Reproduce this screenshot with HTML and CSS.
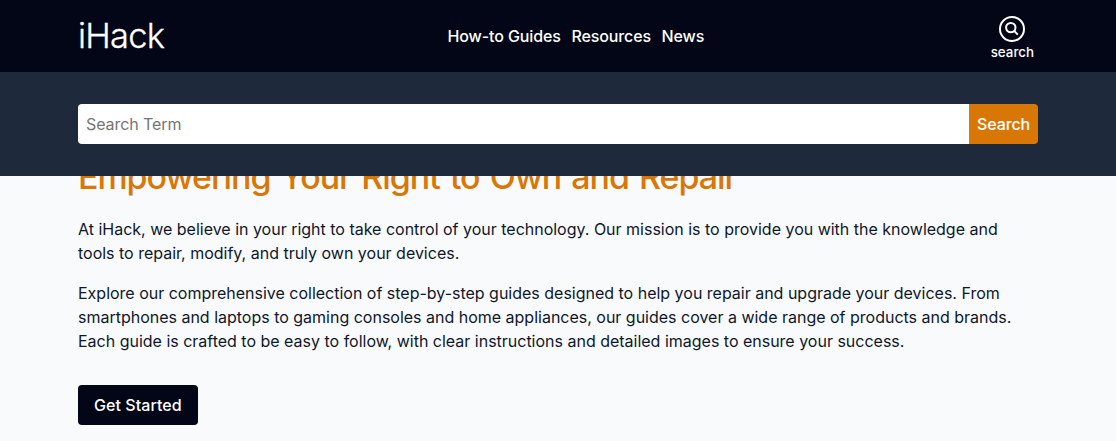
FILE: index.html
```html
<!DOCTYPE html>
<html lang="en">
<head>
<meta charset="utf-8">
<title>iHack</title>
<link rel="stylesheet" href="styles.css">
</head>
<body>
<header class="header">
  <div class="bar">
    <div class="container bar-inner">
      <a class="logo">iHack</a>
      <nav class="nav"><a>How-to Guides</a><a>Resources</a><a>News</a></nav>
      <button class="toggle">
        <svg width="28" height="28" viewBox="0 0 28 28" fill="none" stroke="currentColor" stroke-width="2"><circle cx="14" cy="14" r="12"/><circle cx="12.8" cy="12.6" r="4.7"/><path d="M16.1 15.9L19.8 19.6"/></svg>
        <span>search</span>
      </button>
    </div>
  </div>
  <div class="search-panel">
    <form class="container search-form">
      <input class="field" type="text" placeholder="Search Term">
      <button class="submit" type="button">Search</button>
    </form>
  </div>
</header>
<main class="container hero">
  <h1 class="title">Empowering Your Right to Own and Repair</h1>
  <p class="text">At iHack, we believe in your right to take control of your technology. Our mission is to provide you with the knowledge and tools to repair, modify, and truly own your devices.</p>
  <p class="text">Explore our comprehensive collection of step-by-step guides designed to help you repair and upgrade your devices. From smartphones and laptops to gaming consoles and home appliances, our guides cover a wide range of products and brands. Each guide is crafted to be easy to follow, with clear instructions and detailed images to ensure your success.</p>
  <a class="cta">Get Started</a>
</main>
</body>
</html>
```
FILE: styles.css
```css
* { box-sizing: border-box; margin: 0; padding: 0; }
body { font: 400 16px/24px Inter, "Liberation Sans", sans-serif; background: #f8fafc; color: #0f172a; overflow: hidden; }
button, input { font: inherit; border: 0; }
.container { width: 960px; margin: 0 auto; }
.header { position: relative; z-index: 1; }
.bar { background: #020617; color: #fff; }
.bar-inner { height: 72px; display: flex; justify-content: space-between; align-items: center; }
.logo { font-size: 34.5px; line-height: 40px; font-weight: 300; letter-spacing: -0.8px; -webkit-text-stroke: 0.3px currentColor; }
.nav { display: flex; gap: 10.5px; font-weight: 500; letter-spacing: -0.1px; margin-right: 3px; }
.toggle { display: flex; flex-direction: column; align-items: center; background: none; color: inherit; font-size: 13.33px; line-height: 20px; font-weight: 500; margin-right: 4px; padding-top: 5px; }
.toggle svg { margin-bottom: -1px; }
.search-panel { background: #1e293b; padding: 32px 0; }
.search-form { display: flex; height: 40px; }
.field { flex: 1; padding: 8px; background: #fff; border-radius: 4px 0 0 4px; letter-spacing: -0.07px; }
.field::placeholder { color: #757575; }
.submit { width: 69px; padding: 8px; background: #d97706; color: #fff; font-weight: 500; letter-spacing: -0.1px; border-radius: 0 4px 4px 0; }
.hero { margin-top: -19px; }
.title { font-size: 34px; line-height: 40px; font-weight: 500; letter-spacing: -1.05px; word-spacing: 2.1px; color: #d97706; margin-bottom: 20px; }
.text { margin-bottom: 16px; letter-spacing: -0.007px; }
.cta { display: inline-block; margin-top: 16px; padding: 8px 16px; border-radius: 4px; background: #020617; color: #fff; font-weight: 500; letter-spacing: 0.06px; }
```
